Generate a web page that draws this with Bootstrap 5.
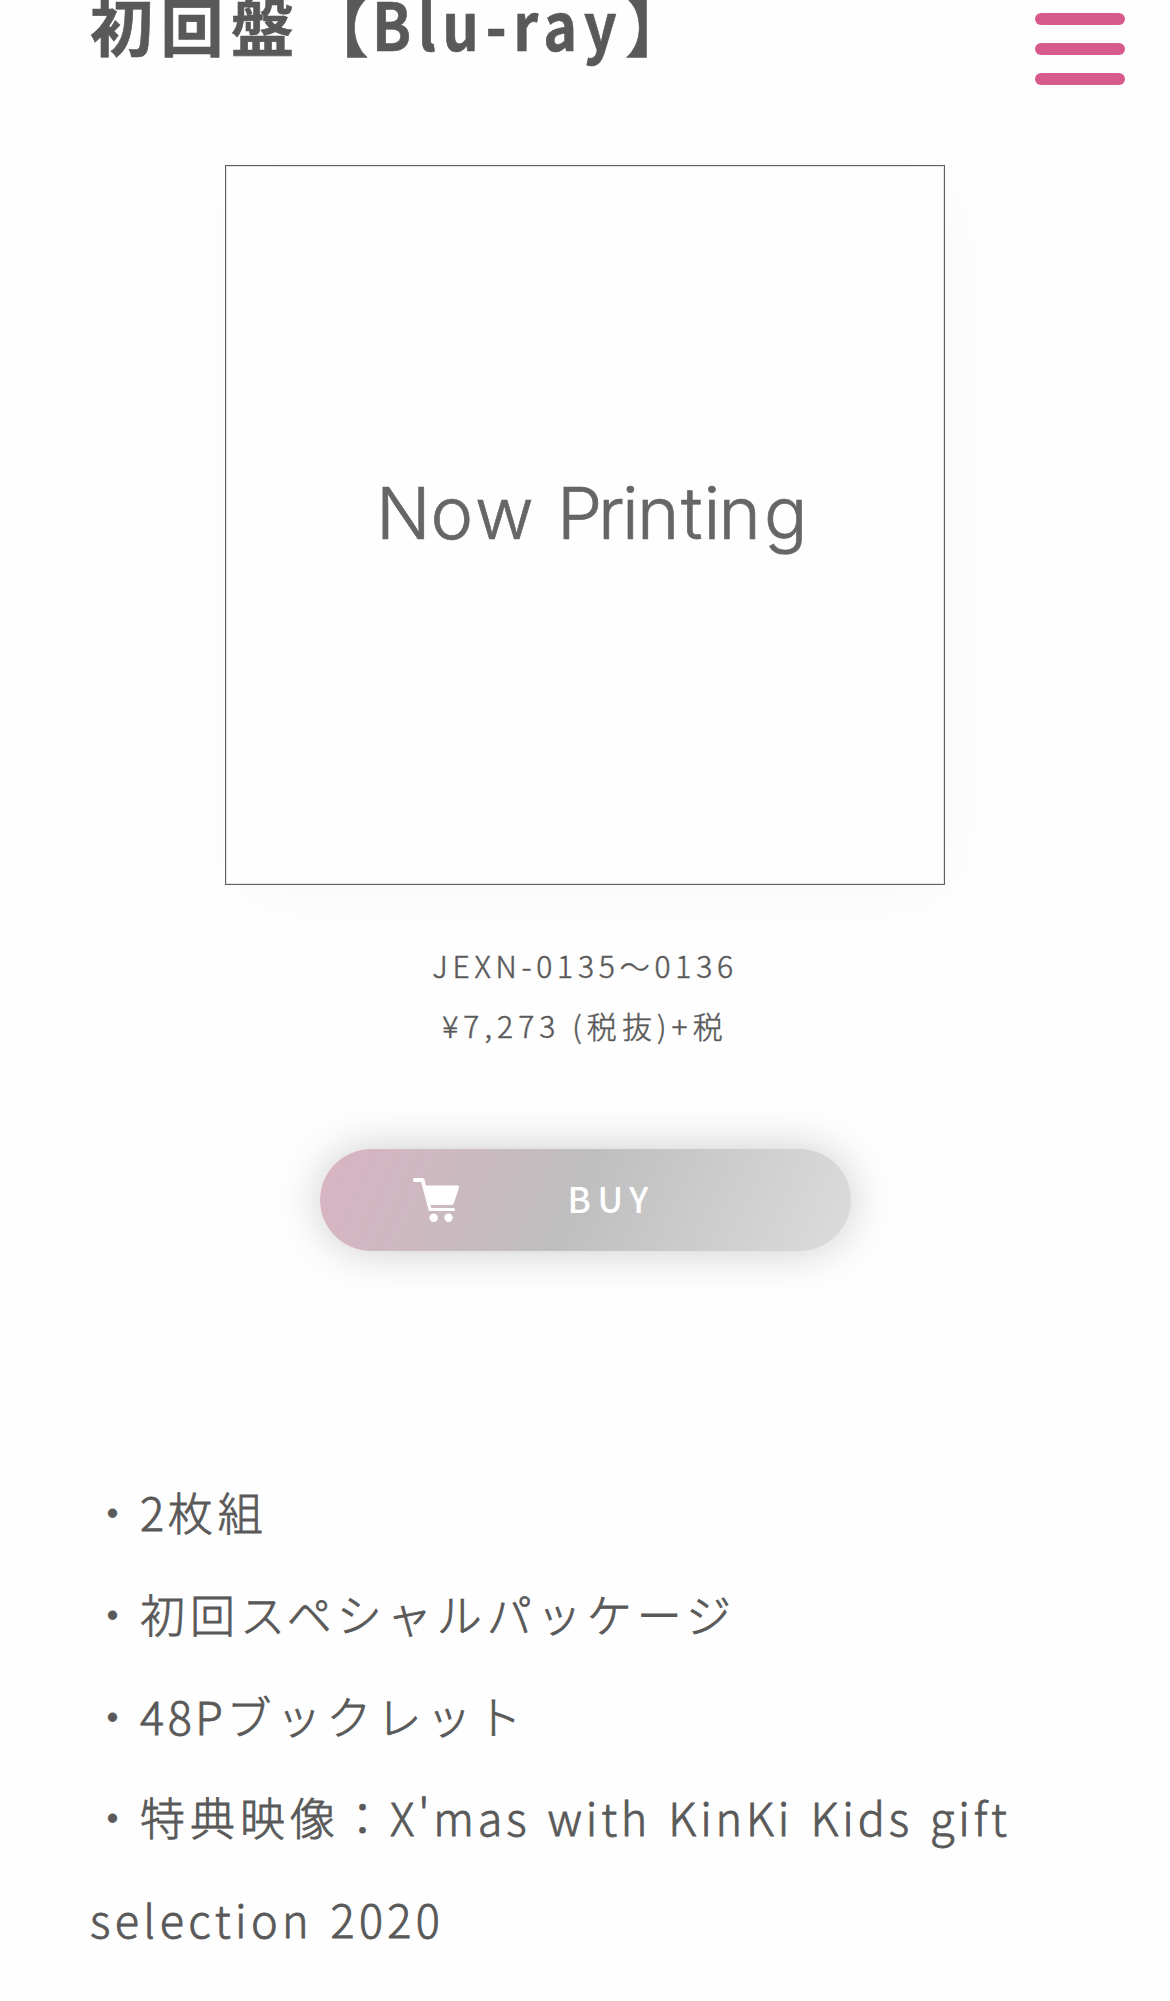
<!DOCTYPE html>
<html lang="ja">
<head>
<meta charset="utf-8">
<meta name="viewport" content="width=device-width, initial-scale=1">
<title>初回盤【Blu-ray】</title>
<link rel="stylesheet" href="https://cdn.jsdelivr.net/npm/bootstrap@5.3.0/dist/css/bootstrap.min.css">
<style>
body{background:#fefefe;color:#595959;font-family:"Noto Sans CJK JP",sans-serif;height:2001px;overflow:hidden}
.disc{padding:0 90px}
.disc-title{font-size:63px;line-height:96px;height:96px;margin:-24px 0 93px;letter-spacing:.12em;white-space:nowrap;-webkit-text-stroke:.6px #595959}
.disc-title .brk{margin-left:4px;margin-right:-4px}
.disc-title .lat{display:inline-block;font-size:66px;line-height:1;transform:scaleX(.87);transform-origin:left;margin-right:-36px}
.jacket{width:720px;height:720px;border:1px solid #5f5f5f;background:#fefefe;box-shadow:inset 0 0 0 1px #e4e4e4,8px 12px 75px rgba(0,0,0,.025)}
.jacket svg{width:100%;height:100%}
.disc-info{font-size:30px;line-height:60px;margin-top:50px;font-weight:300;-webkit-text-stroke:.5px #595959}
.code{letter-spacing:4.8px}
.price{letter-spacing:5.1px}
.buy{width:531px;height:102px;margin-top:94px;border-radius:51px;color:#fff;text-decoration:none;font-size:35px;font-weight:500;background:linear-gradient(114deg,#d7b4c2 3%,#bfbfbf 49%,#dcdcdc 100%);box-shadow:0 0 45px rgba(0,0,0,.2)}
.buy svg{width:46px;height:44px;margin-left:93px;margin-right:109px}
.buy-label{letter-spacing:6.6px;padding-bottom:4px}
.spec{font-size:45px;line-height:101.8px;margin-top:210px;letter-spacing:5px;font-weight:300;-webkit-text-stroke:.8px #595959}
.spec .num{letter-spacing:3.6px}
.spec .feat{letter-spacing:3.8px;word-spacing:3.5px}
.spec .feat2{letter-spacing:4.4px;word-spacing:3px}
.burger{top:13px;right:45px;width:90px;border:0;background:none;padding:0;gap:18px}
.burger span{height:12px;background:#d65a8c}
</style>
<script src="https://cdn.jsdelivr.net/npm/bootstrap@5.3.0/dist/js/bootstrap.bundle.min.js"></script>
</head>
<body>
<button class="burger position-absolute d-flex flex-column" aria-label="menu"><span class="w-100 rounded-pill"></span><span class="w-100 rounded-pill"></span><span class="w-100 rounded-pill"></span></button>
<main class="disc d-flex flex-column">
  <h2 class="disc-title fw-bold">初回盤<span class="brk">【</span><span class="lat">Blu-ray</span>】</h2>
  <div class="jacket mx-auto">
    <svg class="d-block" viewBox="0 0 718 718"><text y="373" x="150 204.500 249 299 331 372 396 411 455 477.500 492.500 538" font-family="Inter" font-weight="300" font-size="72" fill="#666" stroke="#666" stroke-width=".7">Now Printing</text></svg>
  </div>
  <div class="disc-info text-center"><span class="code">JEXN-0135～0136</span><br><span class="price">¥7,273 (税抜)+税</span></div>
  <a class="buy mx-auto d-flex align-items-center" href="#">
    <svg viewBox="0 0 46 44" fill="#fff"><path d="M1.500 0H9.500Q11 0 11.500 1.500L13 7.500H44.500Q46.500 7.500 46 9.500L40.500 26Q40 27 39 27H17.500L18.300 30H40.500Q42 30 42 31.500T40.500 33H17Q16 33 15.600 32L8.200 4H1.500Q0 4 0 2T1.500 0Z"/><circle cx="20.700" cy="39.700" r="4.200"/><circle cx="35.500" cy="39.700" r="4.200"/></svg>
    <span class="buy-label">BUY</span>
  </a>
  <div class="spec"><div>・<span class="num">2</span>枚組</div><div>・初回スペシャルパッケージ</div><div>・<span class="num">48P</span>ブックレット</div><div>・特典映像：<span class="feat">X'mas with KinKi Kids gift</span></div><div class="feat2">selection 2020</div></div>
</main>
</body>
</html>
